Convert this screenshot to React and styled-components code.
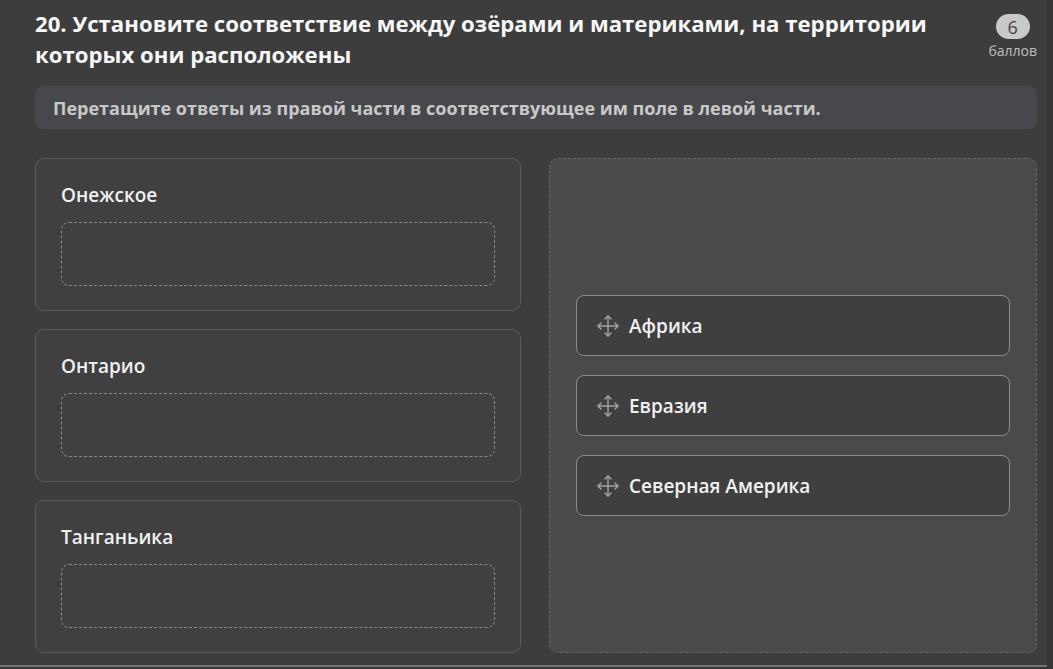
import styled, { createGlobalStyle } from 'styled-components';
import { Move } from 'lucide-react';

const GlobalStyle = createGlobalStyle`
  html, body {
    margin: 0;
    padding: 0;
    background: #363636;
  }
  body {
    font-family: "Open Sans", "Noto Sans", sans-serif;
  }
`;

const Screen = styled.div`
  width: 1047px;
  height: 667px;
  box-sizing: border-box;
  background: #3d3d3d;
  border-bottom: 2px solid #747474;
  padding: 8px 10px 0 35px;
  overflow: hidden;
`;

const Header = styled.div`
  display: flex;
  justify-content: space-between;
  align-items: flex-start;
  gap: 40px;
`;

const Title = styled.h2`
  margin: 0;
  font-size: 22.2px;
  line-height: 31px;
  font-weight: 700;
  color: #f7f7f7;
`;

const Score = styled.div`
  display: flex;
  flex-direction: column;
  align-items: center;
  padding-top: 6px;
  flex-shrink: 0;
`;

const ScoreBadge = styled.span`
  display: flex;
  align-items: center;
  justify-content: center;
  width: 34px;
  height: 25px;
  border-radius: 13px;
  background: #c9c9c9;
  color: #444;
  font-size: 18px;
  font-weight: 500;
`;

const ScoreLabel = styled.span`
  margin-top: 3px;
  font-size: 14px;
  line-height: 17px;
  color: #bdbdbd;
`;

const Hint = styled.div`
  margin: 16px 0 0 0;
  height: 43px;
  border-radius: 8px;
  background: #47484b;
  display: flex;
  align-items: center;
  padding: 0 18px;
  font-size: 18px;
  font-weight: 700;
  color: #c8c8c8;
`;

const Board = styled.div`
  margin-top: 29px;
  display: grid;
  grid-template-columns: 486px 488px;
  gap: 28px;
`;

const Column = styled.div`
  display: flex;
  flex-direction: column;
  gap: 18px;
`;

const Slot = styled.div`
  border: 1.5px solid #5c5c5c;
  border-radius: 9px;
  background: #404040;
  padding: 23px 25px 24px 25px;
  height: 153px;
  box-sizing: border-box;
`;

const SlotLabel = styled.div`
  font-size: 19px;
  line-height: 26px;
  font-weight: 600;
  color: #f1f1f1;
  margin-bottom: 14px;
`;

const DropArea = styled.div`
  height: 64px;
  box-sizing: border-box;
  border: 1.5px dashed #8a8a8a;
  border-radius: 8px;
`;

const Pool = styled.div`
  box-sizing: border-box;
  border: 1.5px dashed #666;
  border-radius: 9px;
  background: #4a4a4a;
  display: flex;
  flex-direction: column;
  justify-content: center;
  gap: 19px;
  padding: 0 26px;
`;

const Answer = styled.div`
  height: 61px;
  box-sizing: border-box;
  border: 1.5px solid #8d8d8d;
  border-radius: 8px;
  background: #3f3f3f;
  display: flex;
  align-items: center;
  gap: 9px;
  padding: 0 19px;
  font-size: 19px;
  font-weight: 600;
  color: #f1f1f1;
  cursor: grab;
`;

const lakes = ['Онежское', 'Онтарио', 'Танганьика'];
const continents = ['Африка', 'Евразия', 'Северная Америка'];

export default function App() {
  return (
    <>
      <GlobalStyle />
      <Screen>
        <Header>
          <Title>
            20. Установите соответствие между озёрами и материками, на территории
            которых они расположены
          </Title>
          <Score>
            <ScoreBadge>6</ScoreBadge>
            <ScoreLabel>баллов</ScoreLabel>
          </Score>
        </Header>
        <Hint>Перетащите ответы из правой части в соответствующее им поле в левой части.</Hint>
        <Board>
          <Column>
            {lakes.map(name => (
              <Slot key={name}>
                <SlotLabel>{name}</SlotLabel>
                <DropArea />
              </Slot>
            ))}
          </Column>
          <Pool>
            {continents.map(name => (
              <Answer key={name}>
                <Move size={24} strokeWidth={1.5} color="#a3a3a3" />
                {name}
              </Answer>
            ))}
          </Pool>
        </Board>
      </Screen>
    </>
  );
}
